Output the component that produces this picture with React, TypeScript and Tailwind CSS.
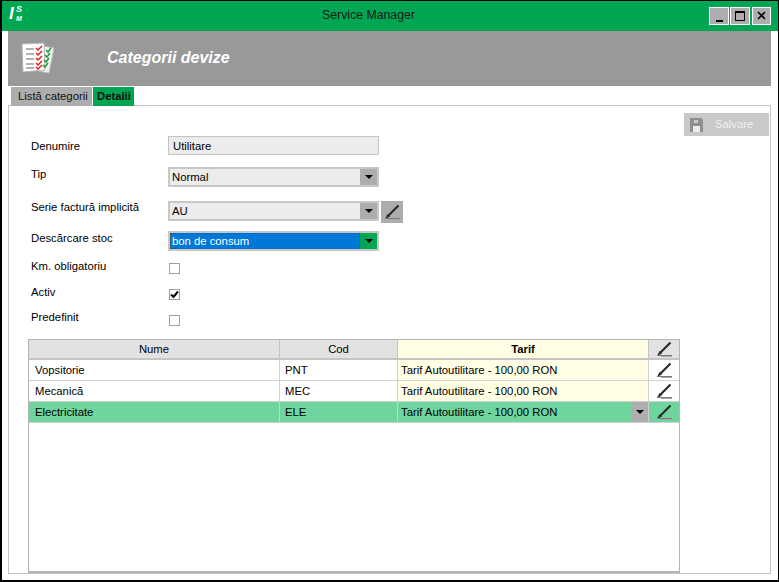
const font = "font-['Liberation_Sans',Arial,sans-serif]";

function Pen() {
    return (
        <svg width="18" height="18" viewBox="0 0 18 18">
            <path d="M15.5 2.5 L5.5 12.5" stroke="#2a2a2a" strokeWidth="2.2" fill="none" />
            <path d="M4.6 11 L7 13.4 L2 16Z" fill="#2a2a2a" />
            <rect x="2" y="15" width="15" height="1" fill="#7a7a7a" />
            <rect x="6" y="16" width="11" height="1" fill="#a8a8a8" />
        </svg>
    );
}

function Arrow() {
    return <span className="block w-0 h-0 border-x-[4px] border-x-transparent border-t-[4px] border-t-black" />;
}

function Select({ value, active = false }: { value: string; active?: boolean }) {
    return (
        <div className={`w-[211px] h-[20px] flex border-2 border-[#c8c8c8] ${active ? 'bg-[#0078d7] text-white' : 'bg-[#ececec] text-black'}`}>
            <div className={`flex-1 pl-[2px] leading-[17px] ${active ? 'outline-1 outline-dotted outline-[#6b4210] -outline-offset-1' : ''}`}>{value}</div>
            <div className={`w-[17px] flex items-center justify-center ${active ? 'bg-[#00a651]' : 'bg-[#adadad]'}`}>
                <Arrow />
            </div>
        </div>
    );
}

function Check({ checked = false }: { checked?: boolean }) {
    return (
        <div className="w-[11px] h-[11px] ml-[1px] border border-[#a0a0a0] bg-white flex items-center justify-center">
            {checked && (
                <svg width="9" height="9" viewBox="0 0 9 9">
                    <path d="M1 4.5 L3.5 7 L8 1.5" stroke="#000" strokeWidth="2" fill="none" />
                </svg>
            )}
        </div>
    );
}

function Row({ label, top, height, gap, children }: { label: string; top: string; height: string; gap: string; children: React.ReactNode }) {
    return (
        <div className={`flex ${height} ${gap}`}>
            <div className={`w-[137px] leading-[14px] text-black ${top}`}>{label}</div>
            {children}
        </div>
    );
}

const rows = [
    { name: 'Vopsitorie', code: 'PNT' },
    { name: 'Mecanică', code: 'MEC' },
    { name: 'Electricitate', code: 'ELE' },
];

export default function App() {
    return (
        <div className={`${font} w-[779px] h-[582px] bg-white border-t border-r border-l-2 border-b-2 border-black text-[11.3px] flex flex-col overflow-hidden`}>
            {/* title bar */}
            <div className="h-[30px] shrink-0 bg-[#00a651] flex items-center">
                <div className="ml-[7px] w-[15px] h-[19px] -mt-[6px] flex text-white italic font-bold">
                    <span className="text-[17px] w-[6px] leading-[19px]">I</span>
                    <div className="flex flex-col pl-[1px]">
                        <span className="text-[9px] h-[11px] leading-[11px]">S</span>
                        <span className="text-[7px] h-[8px] leading-[8px]">M</span>
                    </div>
                </div>
                <div className="flex-1 text-center text-[#1a1a1a] text-[12.3px] pl-[4px] -mt-[1px]">Service Manager</div>
                <div className="flex mr-[7px] -mt-[1px]">
                    <button className="w-[20px] h-[18px] bg-[#adadad] border border-white flex items-end justify-center pb-[2px]">
                        <span className="block w-[7px] h-[2px] bg-black" />
                    </button>
                    <button className="w-[20px] h-[18px] ml-[1px] bg-[#adadad] border border-white flex items-center justify-center">
                        <span className="block w-[10px] h-[10px] border border-black border-t-2" />
                    </button>
                    <button className="w-[19px] h-[18px] ml-[2px] bg-[#adadad] border border-white flex items-center justify-center">
                        <svg width="9" height="9" viewBox="0 0 9 9">
                            <path d="M1 1 L8 8 M8 1 L1 8" stroke="#000" strokeWidth="1.6" />
                        </svg>
                    </button>
                </div>
            </div>

            <div className="flex-1 flex flex-col pl-[6px] pr-[7px] pb-[6px] min-h-0">
                {/* header band */}
                <div className="h-[55px] shrink-0 bg-[#999999] flex items-center">
                    <svg width="34" height="32" viewBox="0 0 34 32" className="ml-[13px] -mt-[2px]">
                        <path d="M22 4 L33 6 L28 31 L17 29Z" fill="#f4f4f4" stroke="#bdbdbd" />
                        <path d="M1 2 L23 1 L24 28 L2 30Z" fill="#fff" stroke="#b5b5b5" />
                        <path d="M5 7 H13 M5 12 H13 M5 17 H13 M5 22 H13 M5 26 H13" stroke="#666" strokeWidth="1" />
                        <path d="M15 6 L17 8 L21 4 M15 11 L17 13 L21 9 M15 16 L17 18 L21 14 M15 21 L17 23 L21 19 M15 25 L17 27 L21 23" stroke="#e02020" strokeWidth="1.5" fill="none" />
                        <path d="M25 8 L27 10 L30 6 M24 13 L26 15 L29 11 M23 18 L25 20 L28 16 M22 23 L24 25 L27 21" stroke="#1f9a3c" strokeWidth="1.5" fill="none" />
                    </svg>
                    <div className="ml-[52px] text-white italic font-bold text-[16px] -mt-[1px]">Categorii devize</div>
                </div>

                {/* tabs */}
                <div className="h-[19px] mt-[1px] shrink-0 flex pl-[3px] relative z-10 -mb-[1px]">
                    <div className="w-[81px] h-[19px] bg-[#adadad] pl-[7px] leading-[19px] text-[#111]">Listă categorii</div>
                    <div className="w-[41px] h-[19px] ml-[1px] bg-[#00a651] pl-[4px] leading-[19px] font-bold text-[#111]">Detalii</div>
                </div>

                {/* tab panel */}
                <div className="flex-1 min-h-0 border border-[#c4c4c4] relative pl-[22px] pt-[30px]">
                    <button className="absolute top-[7px] right-[1px] w-[85px] h-[23px] bg-[#c9c9c9] text-[#f0f0f0] flex items-center pl-[6px] gap-[12px]">
                        <svg width="13" height="14" viewBox="0 0 13 14">
                            <path d="M0 0 H11 L13 2 V14 H0Z" fill="#8f8f8f" />
                            <rect x="4" y="2" width="4" height="3" fill="#c9c9c9" />
                            <rect x="3" y="8" width="7" height="6" fill="#ececec" />
                        </svg>
                        <span>Salvare</span>
                    </button>

                    <Row label="Denumire" top="mt-[3px]" height="h-[19px]" gap="mb-[12px]">
                        <div className="w-[211px] h-[19px] border border-[#c4c4c4] bg-[#ececec] pl-[4px] leading-[18px] text-black">Utilitare</div>
                    </Row>
                    <Row label="Tip" top="mt-0" height="h-[20px]" gap="mb-[14px]">
                        <Select value="Normal" />
                    </Row>
                    <Row label="Serie factură implicită" top="-mt-[1px]" height="h-[20px]" gap="mb-[10px]">
                        <Select value="AU" />
                        <div className="w-[22px] h-[22px] ml-[2px] bg-[#adadad] flex items-center justify-center relative z-10">
                            <Pen />
                        </div>
                    </Row>
                    <Row label="Descărcare stoc" top="mt-0" height="h-[20px]" gap="mb-[12px]">
                        <Select value="bon de consum" active />
                    </Row>
                    <Row label="Km. obligatoriu" top="-mt-[4px]" height="h-[11px]" gap="mb-[15px]">
                        <Check />
                    </Row>
                    <Row label="Activ" top="-mt-[4px]" height="h-[11px]" gap="mb-[15px]">
                        <Check checked />
                    </Row>
                    <Row label="Predefinit" top="-mt-[5px]" height="h-[11px]" gap="mb-[13px]">
                        <Check />
                    </Row>

                    {/* grid */}
                    <div className="-ml-[3px] w-[652px] h-[234px] border-l border-r border-t border-b-2 border-[#b4b4b4]">
                        <div className="flex h-[20px] bg-[#e2e2e2] text-black border-b-2 border-[#c4c4c4]">
                            <div className="w-[251px] text-center border-r border-[#c4c4c4] leading-[18px]">Nume</div>
                            <div className="w-[118px] text-center border-r border-[#c4c4c4] leading-[18px]">Cod</div>
                            <div className="w-[251px] text-center font-bold bg-[#fffde3] border-r border-[#c4c4c4] leading-[18px]">Tarif</div>
                            <div className="flex-1 flex items-center justify-center"><Pen /></div>
                        </div>
                        {rows.map((row, i) => {
                            const selected = i === 2;
                            return (
                                <div key={row.code} className={`flex h-[21px] border-b border-[#d0d0d0] ${selected ? 'bg-[#6fd49e]' : 'bg-white'}`}>
                                    <div className="w-[251px] pl-[6px] border-r border-[#d0d0d0] leading-[20px]">{row.name}</div>
                                    <div className="w-[118px] pl-[5px] border-r border-[#d0d0d0] leading-[20px]">{row.code}</div>
                                    <div className={`w-[251px] pl-[3px] border-r border-[#d0d0d0] leading-[20px] flex justify-between ${selected ? '' : 'bg-[#fffde3]'}`}>
                                        <span>Tarif Autoutilitare - 100,00 RON</span>
                                        {selected && (
                                            <span className="w-[17px] bg-[#adadad] flex items-center justify-center"><Arrow /></span>
                                        )}
                                    </div>
                                    <div className="flex-1 flex items-center justify-center"><Pen /></div>
                                </div>
                            );
                        })}
                    </div>
                </div>
            </div>
        </div>
    );
}
